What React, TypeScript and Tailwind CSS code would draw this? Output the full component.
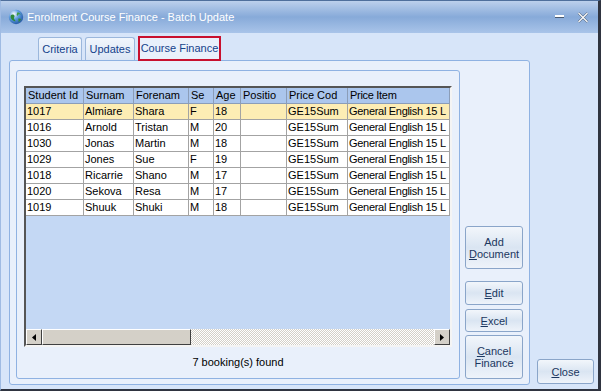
import type { ReactNode } from 'react';

const columns = [
  { label: 'Student Id', width: 'w-[58px]' },
  { label: 'Surnam', width: 'w-[50px]' },
  { label: 'Forenam', width: 'w-[55px]' },
  { label: 'Se', width: 'w-[25px]' },
  { label: 'Age', width: 'w-[27px]' },
  { label: 'Positio', width: 'w-[46px]' },
  { label: 'Price Cod', width: 'w-[61px]' },
  { label: 'Price Item', width: 'w-[102px] tracking-[-0.3px]' },
];

const bookings = [
  ['1017', 'Almiare', 'Shara', 'F', '18'],
  ['1016', 'Arnold', 'Tristan', 'M', '20'],
  ['1030', 'Jonas', 'Martin', 'M', '18'],
  ['1029', 'Jones', 'Sue', 'F', '19'],
  ['1018', 'Ricarrie', 'Shano', 'M', '17'],
  ['1020', 'Sekova', 'Resa', 'M', '17'],
  ['1019', 'Shuuk', 'Shuki', 'M', '18'],
];

function Globe() {
  return (
    <svg width="16" height="16" viewBox="0 0 16 16">
      <defs>
        <radialGradient id="g" cx="0.35" cy="0.3" r="0.8">
          <stop offset="0" stopColor="#ffffff" />
          <stop offset="0.45" stopColor="#5b9be0" />
          <stop offset="1" stopColor="#1d4f9a" />
        </radialGradient>
      </defs>
      <circle cx="8" cy="8" r="7.2" fill="url(#g)" />
      <path d="M3 6c1.5-1 3-.5 3.5.8.4 1.2-1 1.8-.5 3 .4 1 1.6 1.2 1.4 2.6-1.8-.2-3.8-1.4-4.6-3.3C2.4 8 2.5 6.8 3 6z" fill="#2f8a3a" />
      <path d="M9.5 3.2c1.3.2 2.6 1 3.3 2.2-.9.2-1.6-.4-2.3 0-.6.4-.2 1.2-.9 1.3-.8.1-1-.9-.8-1.7.2-.7.6-1.2.7-1.8z" fill="#3a9a44" />
      <path d="M10.5 9.5c.9-.3 2 .1 2.6.6-.4 1.3-1.4 2.4-2.6 3-.3-1 .4-1.5 0-2.3-.2-.5-.4-.9 0-1.3z" fill="#2f8a3a" />
    </svg>
  );
}

function Btn({ children, className }: { children: ReactNode; className: string }) {
  return (
    <div
      className={`flex flex-col items-center justify-center rounded-[3px] border border-[#8aa5c9] bg-gradient-to-b from-[#f2f6fb] via-[#dae5f2] to-[#eef3fa] text-[11px] leading-[12px] text-[#1b3760] ${className}`}
    >
      {children}
    </div>
  );
}

function ArrowBtn({ dir }: { dir: 'left' | 'right' }) {
  return (
    <div className="flex h-full w-[16px] items-center justify-center border border-t-white border-l-white border-r-[#404040] border-b-[#404040] bg-[#d4d0c8]">
      <svg width="4" height="7" viewBox="0 0 4 7">
        {dir === 'left' ? <path d="M4 0v7L0 3.5z" fill="#000" /> : <path d="M0 0v7l4-3.5z" fill="#000" />}
      </svg>
    </div>
  );
}

export default function App() {
  return (
    <div className="flex h-[391px] w-[601px] flex-col border-t border-l border-t-[#4f6f9c] border-l-[#9fbbe3] border-r-[3px] border-b-[2px] border-r-[#2f3440] border-b-[#2f3440] bg-[#d7e5f9] font-['Liberation_Sans',Arial,sans-serif]">
      {/* Title bar */}
      <div className="flex h-[32px] items-center bg-gradient-to-b from-[#bcd0ec] via-[#87aad9] to-[#a9c4e9] pl-[7px] pr-[9px]">
        <Globe />
        <span className="ml-[3px] text-[11px] text-white">Enrolment Course Finance - Batch Update</span>
        <div className="ml-auto flex items-center gap-[13px]">
          <svg width="9" height="4" viewBox="0 0 9 4">
            <rect x="0" y="0" width="9" height="2" fill="#ffffff" />
            <rect x="0" y="2" width="9" height="1" fill="#4a5a70" />
          </svg>
          <svg width="12" height="11" viewBox="0 0 12 11">
            <path d="M1.5 1l9 9M10.5 1l-9 9" stroke="#4a5a70" strokeWidth="2.2" />
            <path d="M1.5 1l9 9M10.5 1l-9 9" stroke="#ffffff" strokeWidth="1.2" />
          </svg>
        </div>
      </div>

      {/* Body */}
      <div className="flex flex-1 pl-[8px] pt-[4px] pb-[5px]">
        <div className="mb-[-1px] flex w-[521px] flex-col">
          {/* Tabs */}
          <div className="flex h-[23px] items-end gap-[3px] pl-[29px]">
            <div className="flex h-[23px] w-[44px] items-center justify-center rounded-t-[3px] border border-b-0 border-[#9bb7dc] bg-gradient-to-b from-[#f1f6fc] to-[#dbe6f5] text-[11px] text-[#15428b]">
              Criteria
            </div>
            <div className="flex h-[23px] w-[50px] items-center justify-center rounded-t-[3px] border border-b-0 border-[#9bb7dc] bg-gradient-to-b from-[#f1f6fc] to-[#dbe6f5] text-[11px] text-[#15428b]">
              Updates
            </div>
            <div className="z-10 mb-[-1px] flex h-[25px] w-[83px] items-center justify-center border-2 border-[#c8102e] bg-[#e9f0fb] text-[11px] text-[#15428b]">
              Course Finance
            </div>
          </div>

          {/* Tab panel */}
          <div className="flex flex-1 gap-[5px] rounded-[3px] border border-[#8fb2e2] bg-[#e9f0fb] px-[6px] pt-[9px] pb-[5px]">
            {/* Group */}
            <div className="flex w-[444px] flex-col rounded-[3px] border border-[#8fb2e2] px-[7px] pt-[15px]">
              <div className="flex h-[261px] w-[428px] flex-col border-2 border-t-[#555555] border-l-[#555555] border-r-[#f4f4f4] border-b-[#f4f4f4] bg-[#c4d8f4] text-[11px] leading-[15px] text-black">
                <div className="flex h-[16px] shrink-0 bg-[#abc6ed]">
                  {columns.map((c) => (
                    <div key={c.label} className={`${c.width} shrink-0 overflow-hidden whitespace-nowrap border-r border-b border-[#8b9db8] pl-[2px]`}>
                      {c.label}
                    </div>
                  ))}
                </div>
                {bookings.map((row, i) => (
                  <div key={row[0]} className={`flex h-[16px] shrink-0 ${i === 0 ? 'bg-[#fdedb4]' : 'bg-white'}`}>
                    {[...row, '', 'GE15Sum', 'General English 15 L'].map((v, j) => (
                      <div key={j} className={`${columns[j].width} shrink-0 overflow-hidden whitespace-nowrap border-r border-b border-[#a3a3a3] pl-[1px]`}>
                        {v}
                      </div>
                    ))}
                  </div>
                ))}
                <div className="flex-1" />
                {/* Horizontal scrollbar */}
                <div className="flex h-[16px] shrink-0">
                  <ArrowBtn dir="left" />
                  <div className="h-full w-[149px] border border-t-white border-l-white border-r-[#404040] border-b-[#404040] bg-[#d4d0c8]" />
                  <div className="h-full flex-1 bg-[repeating-conic-gradient(#d4d0c8_0_25%,#ffffff_0_50%)] bg-[length:2px_2px]" />
                  <ArrowBtn dir="right" />
                </div>
              </div>
              <div className="flex flex-1 items-center justify-center text-[11px] text-black">7 booking(s) found</div>
            </div>

            {/* Action buttons */}
            <div className="flex w-[58px] flex-col justify-end">
              <Btn className="h-[43px]">
                <span>Add</span>
                <span>
                  <u>D</u>ocument
                </span>
              </Btn>
              <Btn className="mt-[12px] h-[24px]">
                <span>
                  <u>E</u>dit
                </span>
              </Btn>
              <Btn className="mt-[4px] h-[23px]">
                <span>
                  <u>E</u>xcel
                </span>
              </Btn>
              <Btn className="mt-[3px] h-[44px]">
                <span>
                  <u>C</u>ancel
                </span>
                <span>Finance</span>
              </Btn>
            </div>
          </div>
        </div>

        {/* Close */}
        <div className="flex w-[67px] flex-col justify-end pl-[7px]">
          <Btn className="h-[25px] w-[57px]">
            <span>
              <u>C</u>lose
            </span>
          </Btn>
        </div>
      </div>
    </div>
  );
}
